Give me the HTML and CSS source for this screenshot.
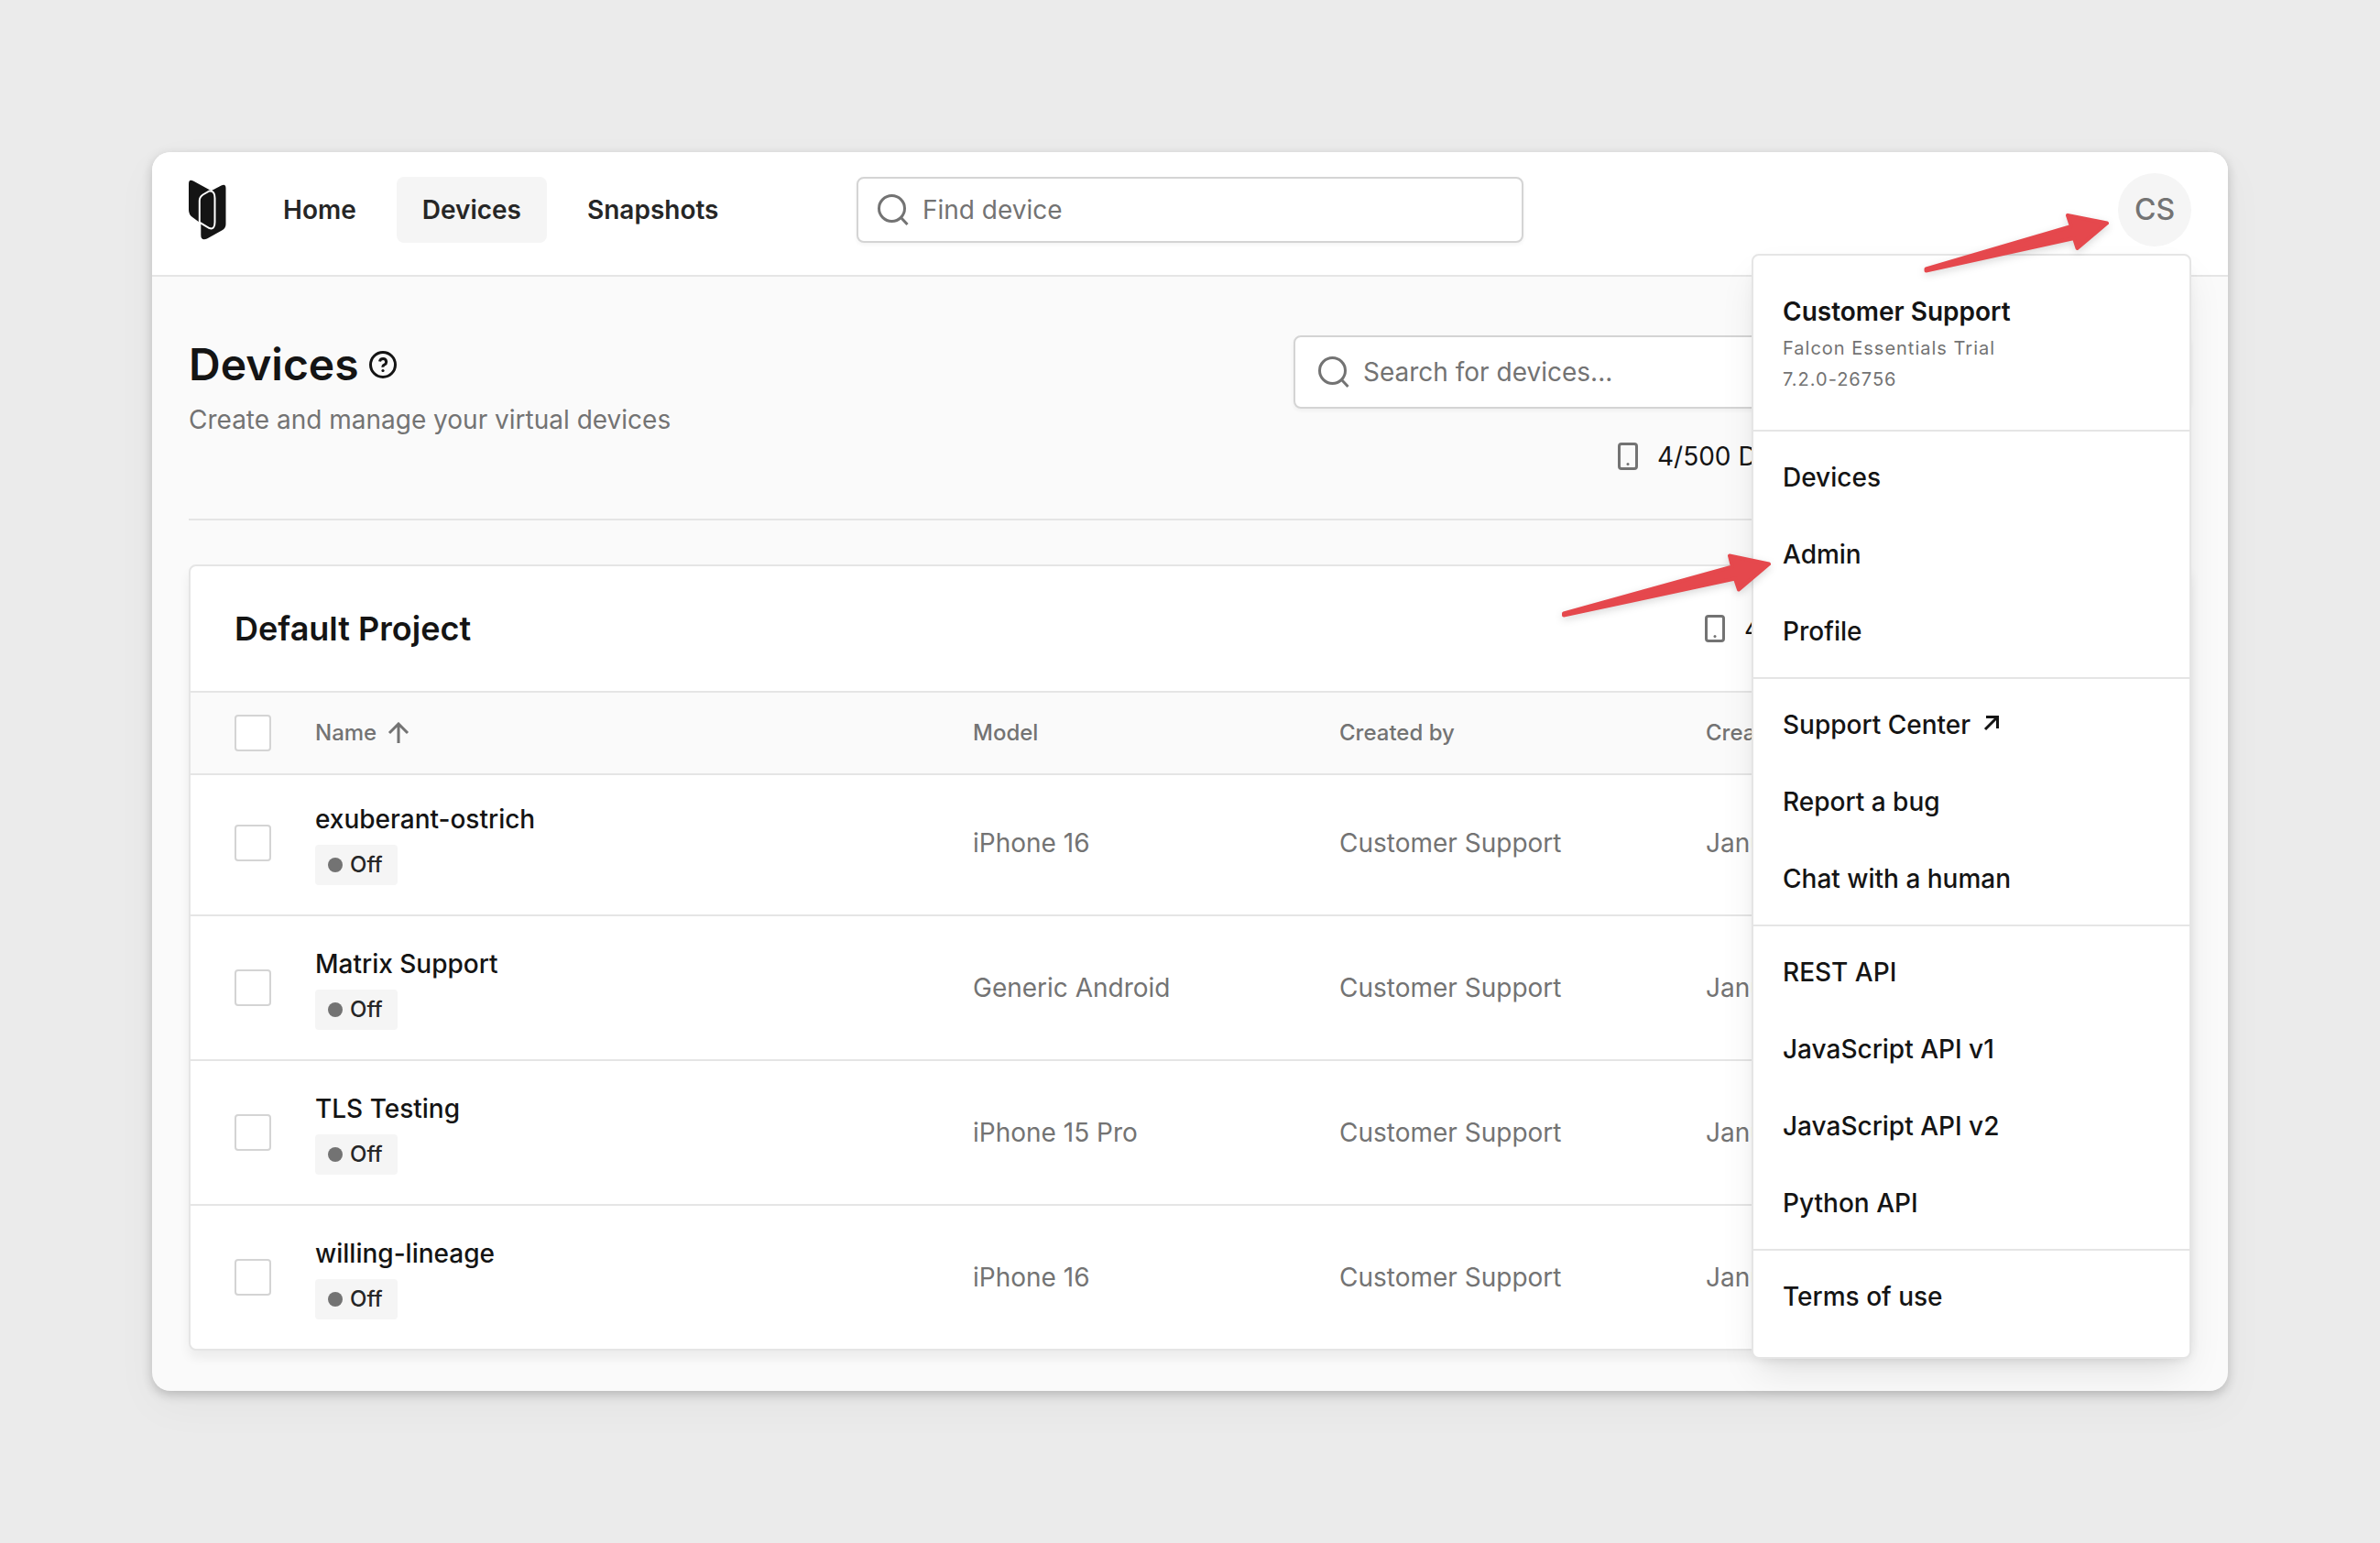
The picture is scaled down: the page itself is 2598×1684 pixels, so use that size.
FILE: index.html
```html
<!DOCTYPE html>
<html lang="en">
<head>
<meta charset="utf-8">
<meta name="viewport" content="width=device-width, initial-scale=1">
<title>Devices</title>
<link rel="stylesheet" href="styles.css">
</head>
<body>
<svg class="sprite" aria-hidden="true">
  <symbol id="search" viewBox="0 0 36 36"><circle cx="16.5" cy="16.5" r="14"/><path d="M26.5 26.5 33.5 34"/></symbol>
  <symbol id="phone" viewBox="0 0 24 32"><rect x="2.5" y="2.5" width="19" height="27" rx="2.5"/><circle class="icon-dot" cx="12" cy="24.5" r="1.5"/></symbol>
</svg>
<div class="app">
  <header class="topbar">
    <div class="topbar-start">
      <a class="brand" href="#" aria-label="Dashboard">
        <svg class="logo" viewBox="0 0 41 66" aria-hidden="true">
          <path d="M0 4.5Q0-1 5 1.5L26 13V50L11.500 46.500 4 41Q0 38 0 33Z"/>
          <path d="M13.300 18 26 11.500 35.500 6.600Q40.500 4 40.500 9.500V48.500Q40.500 52.500 37 55L20 64.500Q13.300 67 13.300 60.500Z"/>
          <path class="logo-cut" d="M11.800 46.700V23Q11.800 19 15.500 16.500L22.500 12.500Q28.500 12 28.500 20V46.500Q28.500 55 22.500 53Z"/>
        </svg>
      </a>
      <nav class="nav">
        <a class="nav-link" href="#">Home</a>
        <a class="nav-link is-active" href="#" aria-current="page">Devices</a>
        <a class="nav-link" href="#">Snapshots</a>
      </nav>
    </div>
    <label class="search">
      <svg class="icon search-icon" aria-hidden="true"><use href="#search"/></svg>
      <input class="search-input" type="text" placeholder="Find device" aria-label="Find device">
    </label>
    <div class="account">
      <button class="avatar" type="button" aria-expanded="true">CS</button>
      <div class="menu">
        <div class="menu-head">
          <div class="menu-name">Customer Support</div>
          <div class="menu-meta">Falcon Essentials Trial</div>
          <div class="menu-meta">7.2.0-26756</div>
        </div>
        <div class="menu-group">
          <a class="menu-item" href="#">Devices</a>
          <a class="menu-item" href="#">Admin</a>
          <a class="menu-item" href="#">Profile</a>
        </div>
        <div class="menu-group">
          <a class="menu-item" href="#">Support Center
            <svg class="external" viewBox="0 0 18 22" aria-hidden="true"><path d="M3 2.500H15.500V15M15.500 2.500 2 16"/></svg>
          </a>
          <a class="menu-item" href="#">Report a bug</a>
          <a class="menu-item" href="#">Chat with a human</a>
        </div>
        <div class="menu-group">
          <a class="menu-item" href="#">REST API</a>
          <a class="menu-item" href="#">JavaScript API v1</a>
          <a class="menu-item" href="#">JavaScript API v2</a>
          <a class="menu-item" href="#">Python API</a>
        </div>
        <div class="menu-group">
          <a class="menu-item" href="#">Terms of use</a>
        </div>
      </div>
      <svg class="arrow arrow-avatar" viewBox="0 0 220 80" aria-hidden="true"><path d="M208 18.500 165 10 169 22 10.500 68.500V70.500L172 35 175.500 46Z"/></svg>
      <svg class="arrow arrow-admin" viewBox="0 0 240 80" aria-hidden="true"><path d="M231 18.500 188 9.500 191 21.500 7 72.500V74.500L194 34.500 198 46.500Z"/></svg>
    </div>
  </header>

  <main class="main">
    <div class="page-head">
      <div class="page-intro">
        <h1 class="page-title">Devices
          <svg class="icon help" viewBox="0 0 32 32" aria-hidden="true"><circle cx="16" cy="16" r="13.500"/><path d="M12.500 12.500Q13 9.500 16.200 9.500T19.700 13Q19.700 15 17.700 16T16 18.700"/><circle class="icon-dot" cx="16" cy="22.500" r="1.600"/></svg>
        </h1>
        <p class="page-sub">Create and manage your virtual devices</p>
      </div>
      <div class="page-tools">
        <label class="search search-large">
          <svg class="icon search-icon" aria-hidden="true"><use href="#search"/></svg>
          <input class="search-input" type="text" placeholder="Search for devices..." aria-label="Search for devices">
        </label>
        <div class="count"><svg class="icon phone" aria-hidden="true"><use href="#phone"/></svg>4/500 Devices</div>
      </div>
    </div>

    <section class="card">
      <div class="card-head">
        <h2 class="card-title">Default Project</h2>
        <div class="count card-count"><svg class="icon phone" aria-hidden="true"><use href="#phone"/></svg>4 Devices</div>
      </div>
      <table class="devices">
        <colgroup><col class="col-check"><col><col class="col-data"><col class="col-data"><col class="col-last"></colgroup>
        <thead>
          <tr>
            <th class="check-cell"><input class="check" type="checkbox" aria-label="Select all"></th>
            <th><span class="sort">Name<svg class="icon sort-icon" viewBox="0 0 24 24" aria-hidden="true"><path d="M12 23V2M2 12 12 2 22 12"/></svg></span></th>
            <th>Model</th><th>Created by</th><th>Created</th>
          </tr>
        </thead>
        <tbody>
          <tr>
            <td class="check-cell"><input class="check" type="checkbox" aria-label="Select exuberant-ostrich"></td>
            <td><div class="device"><a class="device-name" href="#">exuberant-ostrich</a><span class="badge">Off</span></div></td>
            <td>iPhone 16</td><td>Customer Support</td><td>January</td>
          </tr>
          <tr>
            <td class="check-cell"><input class="check" type="checkbox" aria-label="Select Matrix Support"></td>
            <td><div class="device"><a class="device-name" href="#">Matrix Support</a><span class="badge">Off</span></div></td>
            <td>Generic Android</td><td>Customer Support</td><td>January</td>
          </tr>
          <tr>
            <td class="check-cell"><input class="check" type="checkbox" aria-label="Select TLS Testing"></td>
            <td><div class="device"><a class="device-name" href="#">TLS Testing</a><span class="badge">Off</span></div></td>
            <td>iPhone 15 Pro</td><td>Customer Support</td><td>January</td>
          </tr>
          <tr>
            <td class="check-cell"><input class="check" type="checkbox" aria-label="Select willing-lineage"></td>
            <td><div class="device"><a class="device-name" href="#">willing-lineage</a><span class="badge">Off</span></div></td>
            <td>iPhone 16</td><td>Customer Support</td><td>January</td>
          </tr>
        </tbody>
      </table>
    </section>
  </main>
</div>
</body>
</html>
```
FILE: styles.css
```css
:root {
  --ink: #141414;
  --muted: #737373;
  --line: #e5e5e5;
  --field: #d4d4d4;
  --soft: #f5f5f5;
  --canvas: #fafafa;
}

* { box-sizing: border-box; }

body {
  margin: 0;
  padding: 166px;
  background: #ebebeb;
  color: var(--ink);
  font: 400 28px/40px Inter, "Liberation Sans", sans-serif;
}

a { color: inherit; text-decoration: none; }
h1, h2, p { margin: 0; }

.sprite { display: none; }
.icon { flex: none; fill: none; stroke: var(--muted); stroke-width: 3; }
.icon-dot { fill: var(--muted); stroke: none; }

.app {
  border-radius: 20px;
  background: var(--canvas);
  box-shadow: 0 4px 12px rgba(0, 0, 0, .2), 0 16px 48px rgba(0, 0, 0, .04);
}

/* Top bar */
.topbar {
  display: grid;
  grid-template-columns: 1fr 728px 1fr;
  align-items: center;
  padding: 23px 40px 31px;
  border-bottom: 2px solid var(--line);
  border-radius: 20px 20px 0 0;
  background: #fff;
}
.topbar-start { display: flex; align-items: center; gap: 34px; }
.brand { display: flex; }
.logo { width: 41px; height: 66px; fill: var(--ink); }
.logo-cut { fill: none; stroke: #fff; stroke-width: 2; }
.nav { display: flex; gap: 16px; }
.nav-link {
  padding: 16px 28px;
  border-radius: 8px;
  color: #262626;
  font-weight: 600;
}
.nav-link.is-active { background: var(--soft); }

.search {
  display: flex;
  align-items: center;
  gap: 14px;
  height: 72px;
  padding: 0 20px;
  border: 2px solid var(--field);
  border-radius: 8px;
  background: #fff;
  box-shadow: 0 2px 4px rgba(0, 0, 0, .05);
}
.search-large { height: 80px; padding: 0 24px; }
.search-icon { width: 36px; height: 36px; }
.search-input {
  flex: 1;
  min-width: 0;
  padding: 0;
  border: 0;
  outline: 0;
  background: none;
  color: var(--ink);
  font: inherit;
}
.search-input::placeholder { color: var(--muted); opacity: 1; }

.account { position: relative; justify-self: end; }
.avatar {
  display: block;
  width: 80px;
  height: 80px;
  padding: 0;
  border: 0;
  border-radius: 50%;
  background: var(--soft);
  color: var(--muted);
  font: 500 32px/40px Inter, "Liberation Sans", sans-serif;
}

/* Account menu */
.menu {
  position: absolute;
  z-index: 2;
  top: calc(100% + 8px);
  right: 0;
  width: 480px;
  border: 2px solid var(--line);
  border-radius: 8px;
  background: #fff;
  box-shadow: 0 20px 40px -8px rgba(0, 0, 0, .1), 0 8px 16px -8px rgba(0, 0, 0, .1);
}
.menu-head { padding: 41px 32px 38px; }
.menu-name { margin-bottom: 3px; font-weight: 600; }
.menu-meta { color: var(--muted); font-size: 20px; line-height: 34px; letter-spacing: 1px; }
.menu-group { padding: 8px 0; border-top: 2px solid var(--line); }
.menu-group:last-child { padding-bottom: 24px; }
.menu-item { display: flex; align-items: center; gap: 14px; padding: 22px 32px; font-weight: 500; }
.external { width: 18px; height: 22px; fill: none; stroke: var(--ink); stroke-width: 3; }

/* Callout arrows over the page */
.arrow {
  position: absolute;
  z-index: 3;
  height: 80px;
  fill: #e5484d;
  stroke: #e5484d;
  stroke-width: 4;
  stroke-linejoin: round;
  filter: drop-shadow(0 3px 4px rgba(0, 0, 0, .15));
  pointer-events: none;
}
.arrow-avatar { top: 36px; right: 80px; width: 220px; }
.arrow-admin { top: 408px; right: 452px; width: 240px; }

/* Page */
.main { padding: 64px 40px 44px; }
.page-head {
  display: flex;
  justify-content: space-between;
  padding-bottom: 48px;
  margin-bottom: 48px;
  border-bottom: 2px solid var(--line);
}
.page-title { display: flex; align-items: center; gap: 10px; font-size: 48px; line-height: 64px; font-weight: 600; }
.help { width: 32px; height: 32px; stroke: var(--ink); }
.help .icon-dot { fill: var(--ink); }
.page-sub { margin-top: 8px; color: var(--muted); }
.page-tools { display: grid; gap: 32px; width: 980px; }
.count { display: flex; align-items: center; gap: 20px; }
.page-tools .count { padding-left: 353px; }
.phone { width: 24px; height: 32px; }

.card {
  border: 2px solid var(--line);
  border-radius: 8px;
  background: #fff;
  box-shadow: 0 8px 12px rgba(0, 0, 0, .06);
}
.card-head { display: flex; align-items: center; justify-content: space-between; padding: 48px 0 48px 48px; }
.card-title { font-size: 36px; line-height: 40px; font-weight: 600; }
.card-count { width: 530px; }

.devices { width: 100%; table-layout: fixed; border-collapse: separate; border-spacing: 0; }
.col-check { width: 136px; }
.col-data { width: 400px; }
.col-last { width: 528px; }
.devices th {
  height: 92px;
  padding: 0;
  border: solid var(--line);
  border-width: 2px 0;
  background: var(--canvas);
  color: var(--muted);
  font-size: 24px;
  font-weight: 500;
  text-align: left;
}
.devices td { padding: 32px 0; border-bottom: 2px solid var(--line); color: var(--muted); }
.devices tbody tr:first-child td { padding-top: 28px; }
.devices tbody tr:last-child td { border-bottom: 0; }
.devices .check-cell { padding-left: 48px; }
.check {
  appearance: none;
  display: block;
  width: 40px;
  height: 40px;
  margin: 0;
  border: 2px solid var(--field);
  border-radius: 4px;
  background: #fff;
}
.sort { display: flex; align-items: center; gap: 12px; }
.sort-icon { width: 24px; height: 24px; }
.device { display: flex; flex-direction: column; align-items: flex-start; gap: 8px; }
.device-name { color: var(--ink); font-weight: 500; }
.badge {
  display: flex;
  align-items: center;
  gap: 8px;
  height: 44px;
  padding: 0 16px 0 14px;
  border-radius: 4px;
  background: var(--soft);
  color: #262626;
  font-size: 24px;
  font-weight: 500;
}
.badge::before { content: ""; width: 16px; height: 16px; border-radius: 50%; background: var(--muted); }
```
